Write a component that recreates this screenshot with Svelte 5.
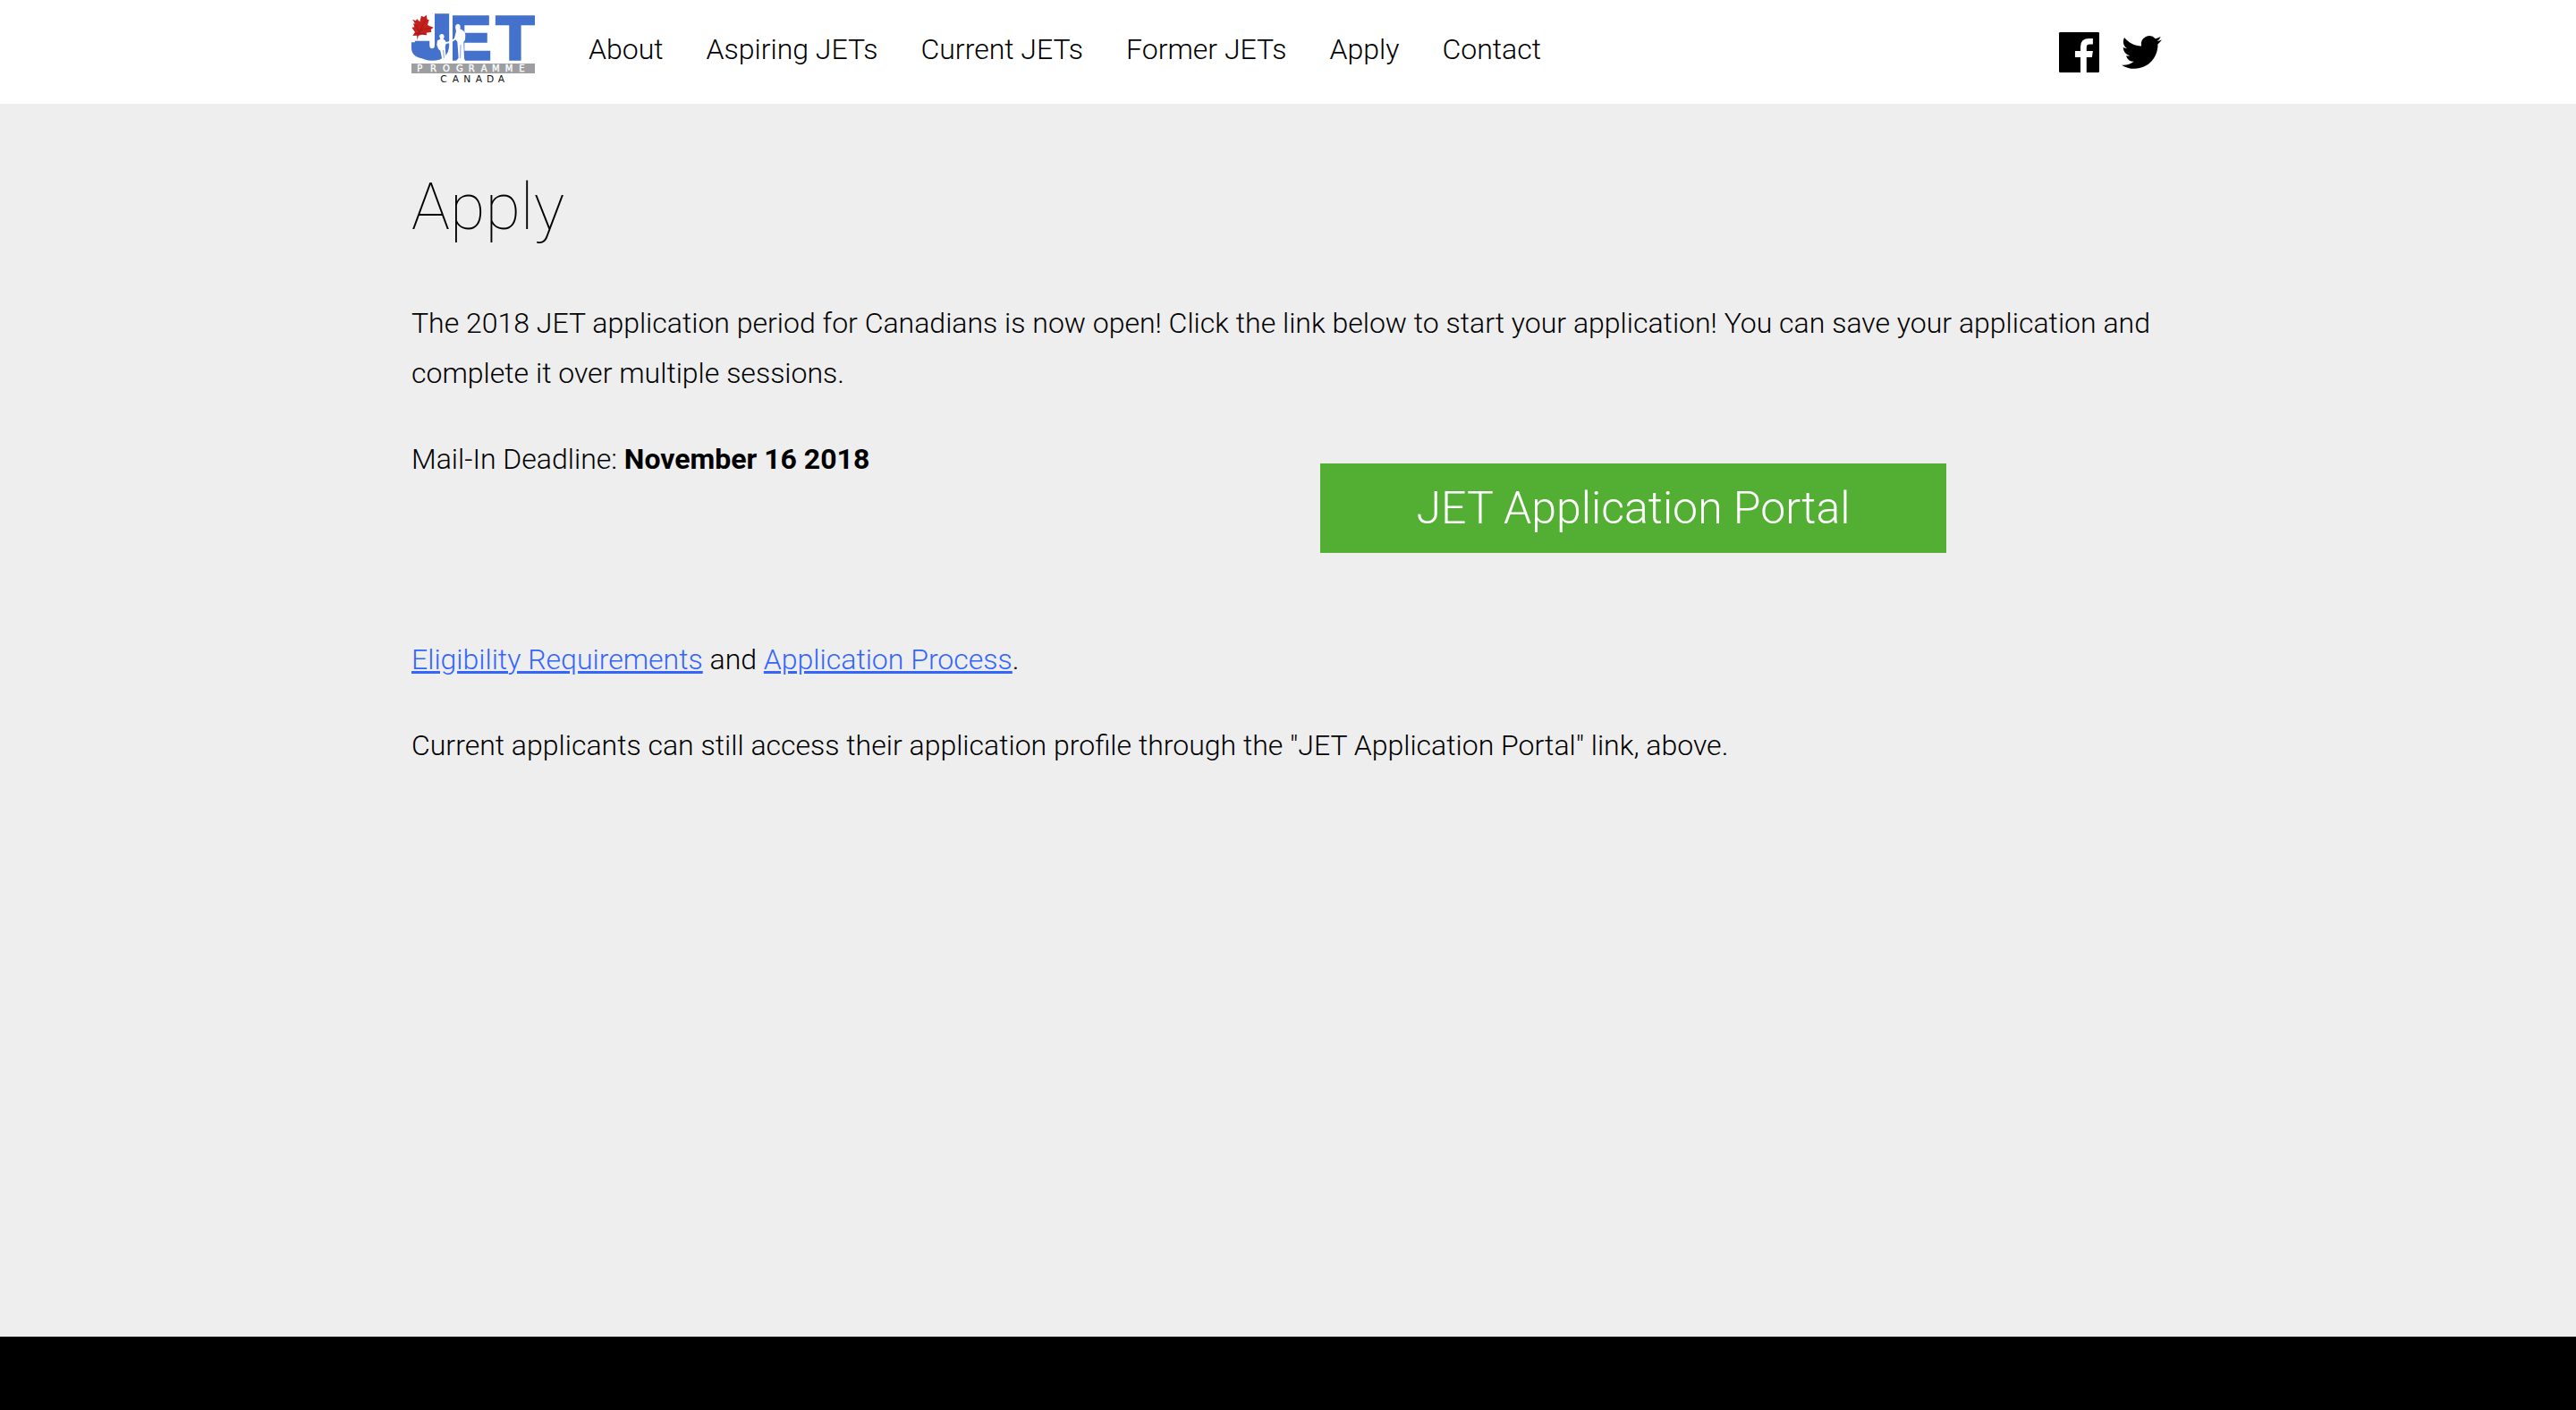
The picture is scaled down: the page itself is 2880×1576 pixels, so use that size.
<script>
  const links = ['About', 'Aspiring JETs', 'Current JETs', 'Former JETs', 'Apply', 'Contact'];
</script>

<div class="page">
  <header>
    <div class="container bar">
      <a class="logo" href="#home" aria-label="JET Programme Canada">
        <svg viewBox="30 48 414 232" aria-hidden="true">
          <g class="jet">
            <text class="j" x="43" y="196">J</text>
            <text x="159" y="198">E</text>
            <text x="314" y="198">T</text>
          </g>
          <path fill="#4471cc" d="M30 142H66V196Q30 190 30 160Z" />
          <path fill="#fff" d="M124 122Q124 114 132 114Q140 115 140 124L137 131Q144 134 146 141L162 137L174 128L180 104L178 96Q175 82 186 80Q195 82 194 92L193 97Q207 101 211 116L210 134L205 140L207 196L210 204H180L188 194L184 140L178 133L163 143L146 147L143 156L146 194L150 204H128L132 194L127 170L120 164L115 150L117 136L127 131Z" />
          <path fill="none" stroke="#4471cc" stroke-width="2" d="M195 150L194 195M137 168L139 194" />
          <path fill="#c4201c" d="M33 65L45 70L48 63L58 73L63 53L72 57L80 50L83 65L89 67L84 83L90 87L104 92L95 99L97 107L80 110L82 118L64 116L53 120L50 134L48 119L34 120L42 108L31 92L40 91L36 79L44 81Z" />
          <path fill="none" stroke="#8e1612" stroke-width="2" d="M52 116L78 66M56 108L40 76M62 100L94 94M54 113L40 112M54 113L76 113" />
          <rect x="30" y="213" width="414" height="33" fill="#9c9ea1" />
          <text class="programme" x="49 93 135 180 221 263 300 344 391" y="241">PROGRAMME</text>
          <text class="canada" x="127 167 205 245 282 320" y="277">CANADA</text>
        </svg>
      </a>
      <nav>
        {#each links as link}
          <a href="#{link.toLowerCase().replace(' ', '-')}">{link}</a>
        {/each}
      </nav>
      <div class="social">
        <a href="#facebook" aria-label="Facebook">
          <svg viewBox="0 0 133 133" aria-hidden="true">
            <rect width="133" height="133" rx="4" />
            <path fill="#fff" d="M71 133V83H53V62H71V48Q71 21 100 21H112V40H101Q91 40 91 50V62H112L109 83H91V133Z" />
          </svg>
        </a>
        <a href="#twitter" aria-label="Twitter">
          <svg viewBox="0 0 24 24" aria-hidden="true">
            <path d="M23.953 4.57a10 10 0 01-2.825.775 4.958 4.958 0 002.163-2.723c-.951.555-2.005.959-3.127 1.184a4.92 4.92 0 00-8.384 4.482C7.69 8.095 4.067 6.13 1.64 3.162a4.822 4.822 0 00-.666 2.475c0 1.71.87 3.213 2.188 4.096a4.904 4.904 0 01-2.228-.616v.06a4.923 4.923 0 003.946 4.827 4.996 4.996 0 01-2.212.085 4.936 4.936 0 004.604 3.417 9.867 9.867 0 01-6.102 2.105c-.39 0-.779-.023-1.17-.067a13.995 13.995 0 007.557 2.209c9.053 0 13.998-7.496 13.998-13.985 0-.21 0-.42-.015-.63A9.935 9.935 0 0023.953 4.57z" />
          </svg>
        </a>
      </div>
    </div>
  </header>

  <main class="container">
    <h1>Apply</h1>
    <p>
      The 2018 JET application period for Canadians is now open! Click the link below to start your
      application! You can save your application and complete it over multiple sessions.
    </p>
    <div class="columns">
      <p>Mail-In Deadline: <strong>November 16 2018</strong></p>
      <a class="portal" href="#portal">JET Application Portal</a>
    </div>
    <p>
      <a href="#eligibility">Eligibility Requirements</a> and
      <a href="#process">Application Process</a>.
    </p>
    <p>
      Current applicants can still access their application profile through the "JET Application
      Portal" link, above.
    </p>
  </main>

  <footer></footer>
</div>

<style>
  :global(body) {
    margin: 0;
    background: #eee;
  }
  .page {
    display: flex;
    flex-direction: column;
    min-height: 100vh;
    font-family: Roboto, sans-serif;
    font-size: 32px;
    font-weight: 300;
    line-height: 56px;
    color: #000;
  }
  .container {
    box-sizing: border-box;
    width: 100%;
    max-width: 1960px;
    margin: 0 auto;
  }
  header {
    background: #fff;
  }
  .bar {
    display: flex;
    align-items: flex-start;
    height: 116px;
  }
  .logo {
    width: 138px;
    padding-top: 16px;
  }
  svg {
    display: block;
    width: 100%;
    overflow: visible;
  }
  .jet {
    font: bold 208px 'Liberation Sans', sans-serif;
    fill: #4471cc;
    stroke: #4471cc;
    stroke-width: 10px;
  }
  .j {
    font: 900 198px Inter, sans-serif;
  }
  .programme {
    font: 30px 'DejaVu Sans', sans-serif;
    fill: #fff;
    stroke: #fff;
    stroke-width: 1px;
  }
  .canada {
    font: 32px 'DejaVu Sans', sans-serif;
    fill: #111;
  }
  nav {
    display: flex;
    gap: 48px;
    margin-left: 60px;
    padding-top: 27px;
  }
  nav a {
    color: #000;
    text-decoration: none;
  }
  .social {
    display: flex;
    gap: 25px;
    margin-left: auto;
    padding: 36px 3px 0 0;
  }
  .social a {
    width: 45px;
  }
  main {
    flex: 1;
  }
  h1 {
    margin: 61px 0 46px;
    font-size: 72px;
    font-weight: 100;
    line-height: 110px;
  }
  p {
    margin: 0 0 40px;
  }
  p a {
    color: #36f;
  }
  strong {
    font-weight: 700;
  }
  .columns {
    display: flex;
    justify-content: space-between;
    margin-bottom: 91px;
  }
  .columns p {
    margin: 0;
  }
  .portal {
    width: 700px;
    margin: 33px 244px 0 0;
    background: #53af33;
    color: #fff;
    font-size: 50px;
    line-height: 100px;
    text-align: center;
    text-decoration: none;
  }
  footer {
    height: 82px;
    background: #000;
  }
</style>
